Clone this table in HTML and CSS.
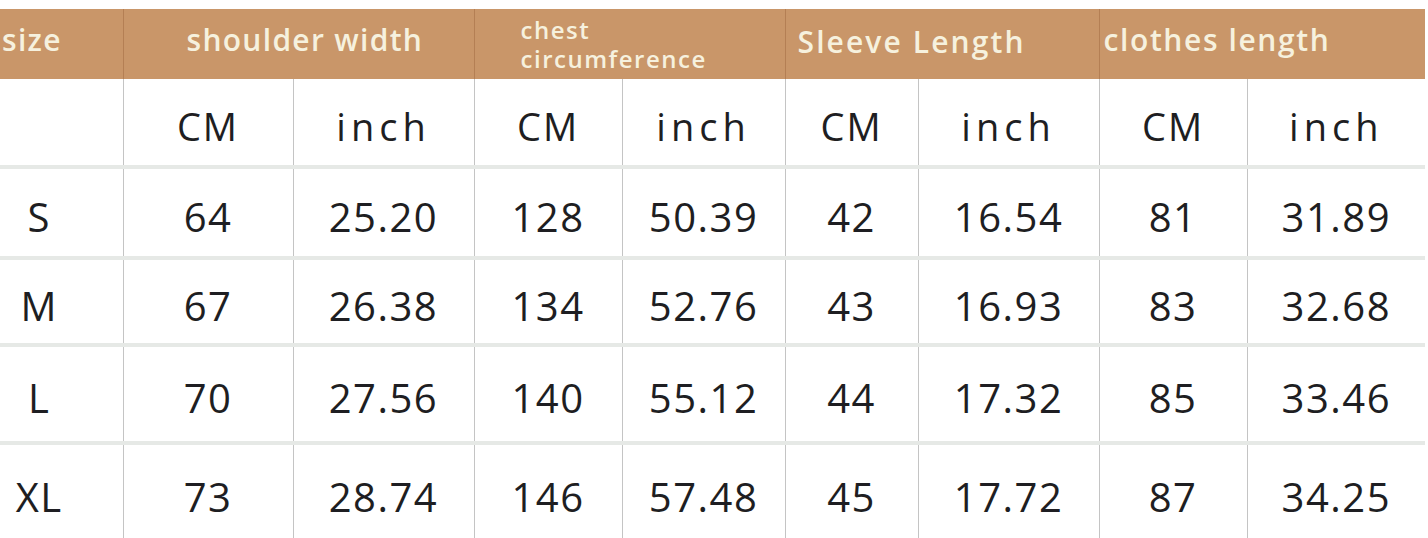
FILE: index.html
```html
<!DOCTYPE html>
<html>
<head>
<meta charset="utf-8">
<link rel="stylesheet" href="styles.css">
</head>
<body>
<table class="chart">
  <colgroup>
    <col class="c-size"><col class="c1"><col class="c2"><col class="c3"><col class="c4"><col class="c5"><col class="c6"><col class="c7"><col class="c8">
  </colgroup>
  <thead>
    <tr class="head">
      <th class="h-size">size</th>
      <th colspan="2" class="h-shoulder">shoulder width</th>
      <th colspan="2" class="h-chest"><span class="two">chest<br>circumference</span></th>
      <th colspan="2" class="h-sleeve">Sleeve Length</th>
      <th colspan="2" class="h-clothes">clothes length</th>
    </tr>
  </thead>
  <tbody>
    <tr class="units r0">
      <td class="size"></td>
      <td class="cm">CM</td><td class="inch">inch</td>
      <td class="cm">CM</td><td class="inch">inch</td>
      <td class="cm">CM</td><td class="inch">inch</td>
      <td class="cm">CM</td><td class="inch">inch</td>
    </tr>
    <tr class="r1">
      <td class="size">S</td><td>64</td><td>25.20</td><td>128</td><td>50.39</td><td>42</td><td>16.54</td><td>81</td><td>31.89</td>
    </tr>
    <tr class="r2">
      <td class="size">M</td><td>67</td><td>26.38</td><td>134</td><td>52.76</td><td>43</td><td>16.93</td><td>83</td><td>32.68</td>
    </tr>
    <tr class="r3">
      <td class="size">L</td><td>70</td><td>27.56</td><td>140</td><td>55.12</td><td>44</td><td>17.32</td><td>85</td><td>33.46</td>
    </tr>
    <tr class="r4">
      <td class="size">XL</td><td>73</td><td>28.74</td><td>146</td><td>57.48</td><td>45</td><td>17.72</td><td>87</td><td>34.25</td>
    </tr>
  </tbody>
</table>
</body>
</html>
```
FILE: styles.css
```css
html, body {
  margin: 0;
  padding: 0;
  background: #ffffff;
}
body {
  padding-top: 9px;
  overflow: hidden;
}
.chart {
  border-collapse: collapse;
  table-layout: fixed;
  width: 1425px;
  font-family: "Open Sans", "DejaVu Sans", sans-serif;
}
.c-size { width: 123px; }
.c1 { width: 170px; }
.c2 { width: 181px; }
.c3 { width: 148px; }
.c4 { width: 163px; }
.c5 { width: 133px; }
.c6 { width: 181px; }
.c7 { width: 148px; }
.c8 { width: 178px; }

.head th {
  background: #c99669;
  color: #f6f1de;
  font-weight: 600;
  font-size: 30px;
  letter-spacing: 1.3px;
  height: 70px;
  padding: 0 0 8px 0;
  border-left: 1px solid #b47f54;
  text-align: left;
  vertical-align: middle;
  line-height: 1;
  box-sizing: border-box;
}
.head th:first-child { border-left: none; }
.head th.h-size { padding-left: 2px; }
.head th.h-shoulder { padding-left: 63px; }
.head th.h-chest { padding-left: 46px; padding-bottom: 0; }
.head th.h-sleeve { padding-left: 12px; padding-bottom: 4px; letter-spacing: 2.1px; }
.head th.h-clothes { padding-left: 4px; letter-spacing: 1.6px; }
.two {
  display: inline-block;
  font-size: 24px;
  line-height: 29px;
  letter-spacing: 1.5px;
  padding-top: 0;
}

tbody td {
  color: #1e1e22;
  font-size: 40px;
  font-weight: 500;
  letter-spacing: 1.5px;
  text-align: center;
  vertical-align: middle;
  padding: 8px 0 0 0;
  border-left: 1px solid #c4c4c4;
  border-top: 4px solid #e6e9e6;
  line-height: 1;
}
tbody td.size {
  border-left: none;
  padding-right: 44px;
}
.units td { border-top: none; font-size: 38px; }
.units td.inch { letter-spacing: 5px; }
.units td.cm { letter-spacing: 2px; }
.r0 td { height: 78px; }
.r1 td { height: 79px; }
.r2 td { height: 75px; }
.r3 td { height: 86px; }
.r4 td { height: 87px; }
```
